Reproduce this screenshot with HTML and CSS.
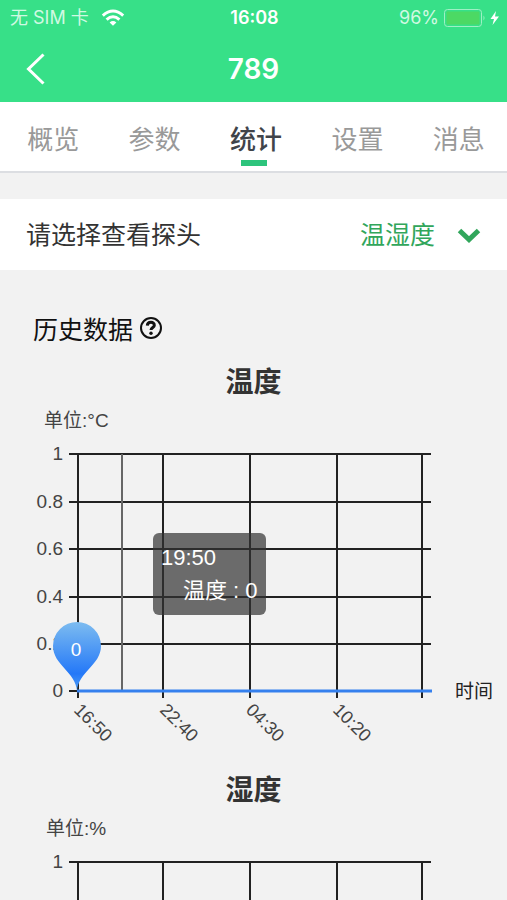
FILE: index.html
```html
<!DOCTYPE html>
<html lang="zh-CN">
<head>
<meta charset="utf-8">
<meta name="viewport" content="width=device-width, initial-scale=1">
<title>789</title>
<link rel="stylesheet" href="styles.css">
</head>
<body>
<header class="top">
  <div class="status">
    <span class="status-left">无 SIM 卡
      <svg width="24" height="18" viewBox="0 0 24 18" aria-hidden="true"><g fill="none" stroke="#fff" stroke-width="3"><path d="M1.8 6.6Q12-2.6 22.2 6.6"/><path d="M5.6 10.6Q12 4.8 18.4 10.6"/></g><path d="M8.6 13.4Q12 10.6 15.4 13.4L12 16.8z" fill="#fff"/></svg>
    </span>
    <span class="status-time">16:08</span>
    <span class="status-right">96%
      <svg width="56" height="20" viewBox="0 0 56 20" aria-hidden="true"><rect x="1.500" y="1.500" width="37" height="17" rx="3" fill="none" stroke="#9ef0c4"/><rect x="3.500" y="3.500" width="33" height="13" rx="1" fill="#4cd964"/><path d="M40.500 7.500q2 2.500 0 5z" fill="#9ef0c4"/><path d="M53 3L47.500 11H51L49.500 17L56 8.500H52z" fill="#fff"/></svg>
    </span>
  </div>
  <div class="titlebar">
    <button class="back" type="button" aria-label="返回"><svg width="20" height="32" viewBox="0 0 20 32"><path d="M17.500 1.500L2.500 16L17.500 30.500" fill="none" stroke="#fff" stroke-width="3"/></svg></button>
    <h1>789</h1>
  </div>
</header>
<nav class="tabs">
  <button type="button">概览</button>
  <button type="button">参数</button>
  <button type="button" class="active">统计</button>
  <button type="button">设置</button>
  <button type="button">消息</button>
</nav>
<main>
  <div class="picker">
    <label for="probe">请选择查看探头</label>
    <span class="picker-value">
      <select id="probe"><option>温湿度</option></select>
      <svg width="24" height="16" viewBox="0 0 24 16" aria-hidden="true"><path d="M2.500 3.500L12 12.500L21.500 3.500" fill="none" stroke="#31a65b" stroke-width="5"/></svg>
    </span>
  </div>
  <h2 class="history">历史数据
    <svg width="24" height="24" viewBox="0 0 24 24" aria-hidden="true"><circle cx="12" cy="12" r="10" fill="none" stroke="#111" stroke-width="2"/><path d="M8.300 9.600C8.500 5.200 15.700 5.400 15.300 9.500C15.100 11.500 12.200 11.600 12 14" fill="none" stroke="#111" stroke-width="3"/><circle cx="12" cy="17.300" r="1.700" fill="#111"/></svg>
  </h2>
  <section class="chart">
    <h3>温度</h3>
    <svg viewBox="0 0 507 358">
      <defs><linearGradient id="pin" x1="0" y1="0" x2="0" y2="1"><stop offset="0" stop-color="#7dbcf0"/><stop offset=".75" stop-color="#2478f8"/><stop offset="1" stop-color="#52a0f5"/></linearGradient></defs>
      <text class="unit" x="44" y="21">单位:°C</text>
      <path class="grid" d="M69 48H431M69 96H431M69 143H431M69 191H431M69 238H431M69 285H431M78 48V292M163 48V292M250 48V292M337 48V292M422 48V292"/>
      <path class="cursor" d="M122 48V285"/>
      <g class="y-labels"><text x="63" y="54">1</text><text x="63" y="102">0.8</text><text x="63" y="149">0.6</text><text x="63" y="197">0.4</text><text x="63" y="244">0.2</text><text x="63" y="291">0</text></g>
      <g class="x-labels"><text transform="translate(73 305) rotate(45)">16:50</text><text transform="translate(159 305) rotate(45)">22:40</text><text transform="translate(245 305) rotate(45)">04:30</text><text transform="translate(332 305) rotate(45)">10:20</text></g>
      <path class="series" d="M77 285H432"/>
      <path d="M77 285C76 266 53 259 53 240A24 24 0 0 1 101 240C101 259 78 266 77 285z" fill="url(#pin)"/>
      <text class="pin-label" x="76" y="250">0</text>
      <text class="axis-name" x="455" y="292">时间</text>
      <rect class="tip" x="153" y="127" width="113" height="82" rx="6"/>
      <text class="tip-text" x="161" y="159">19:50</text>
      <text class="tip-text" x="183" y="192">温度 : 0</text>
    </svg>
  </section>
  <section class="chart">
    <h3>湿度</h3>
    <svg viewBox="0 0 507 358">
      <text class="unit" x="46" y="21">单位:%</text>
      <path class="grid" d="M69 48H431M69 96H431M69 143H431M69 191H431M69 238H431M69 285H431M78 48V292M163 48V292M250 48V292M337 48V292M422 48V292"/>
      <g class="y-labels"><text x="63" y="54">1</text></g>
    </svg>
  </section>
</main>
</body>
</html>
```
FILE: styles.css
```css
* {
  box-sizing: border-box;
}

body {
  margin: 0;
  height: 100vh;
  display: flex;
  flex-direction: column;
  overflow: hidden;
  background: #f2f2f2;
  color: #333;
  font-family: "Liberation Sans", "Noto Sans CJK SC", sans-serif;
}

h1, h2, h3 {
  margin: 0;
}

button, select {
  margin: 0;
  padding: 0;
  border: 0;
  background: none;
  font: inherit;
  color: inherit;
}

.top {
  background: #37e088;
  color: #fff;
  height: 102px;
  flex: none;
}

.status {
  display: grid;
  grid-template-columns: 1fr auto 1fr;
  align-items: center;
  height: 35px;
  padding: 0 8px 0 10px;
  font: 18px/24px Inter, "Noto Sans CJK SC", sans-serif;
}

.status-left,
.status-right {
  display: flex;
  align-items: center;
  gap: 12px;
  color: #d0f9e2;
}

.status-right {
  justify-content: flex-end;
  gap: 4px;
}

.status-time {
  font-weight: 600;
}

.titlebar {
  display: grid;
  grid-template-columns: 1fr auto 1fr;
  align-items: center;
  height: 67px;
  padding: 0 26px;
}

.back {
  justify-self: start;
  height: 32px;
}

.back svg {
  display: block;
}

.titlebar h1 {
  font: 600 28px/36px Inter, sans-serif;
}

.tabs {
  flex: none;
  display: flex;
  height: 71px;
  background: #fff;
  border-bottom: 2px solid #dcdee2;
}

.tabs button {
  flex: 1;
  position: relative;
  padding: 2px 0 0 5px;
  font-size: 26px;
  color: #999;
}

.tabs .active {
  font-weight: 500;
  color: #40444a;
}

.tabs .active::after {
  content: "";
  position: absolute;
  left: 50%;
  bottom: 5px;
  width: 26px;
  height: 6px;
  margin-left: -13px;
  background: #2dc47c;
}

main {
  flex: 1;
  min-height: 0;
  overflow: hidden;
  padding-top: 26px;
}

.picker {
  display: flex;
  justify-content: space-between;
  align-items: center;
  height: 71px;
  padding: 0 26px;
  background: #fff;
  font-size: 25px;
  line-height: 34px;
}

.picker-value {
  display: flex;
  align-items: center;
  gap: 21px;
  color: #31a65b;
}

.picker select {
  appearance: none;
}

.history {
  display: flex;
  align-items: center;
  gap: 6px;
  height: 86px;
  padding: 29px 33px 0;
  font-size: 25px;
  font-weight: 400;
  color: #111;
}

.chart h3 {
  height: 50px;
  padding-top: 2px;
  line-height: 50px;
  text-align: center;
  font-size: 28px;
  font-weight: 700;
}

.chart svg {
  display: block;
  width: 100%;
}

.chart text {
  font-size: 19px;
  fill: #444;
}

.grid {
  fill: none;
  stroke: #222;
  stroke-width: 2;
}

.cursor {
  stroke: #666;
  stroke-width: 2;
}

.y-labels {
  text-anchor: end;
}

.chart .x-labels text {
  font-size: 18px;
}

.series {
  stroke: #3580ee;
  stroke-width: 3;
}

.chart .pin-label {
  fill: #fff;
  text-anchor: middle;
}

.chart .axis-name {
  fill: #222;
}

.tip {
  fill: #323232;
  fill-opacity: 0.7;
}

.chart .tip-text {
  font-size: 22px;
  fill: #fff;
}
```
